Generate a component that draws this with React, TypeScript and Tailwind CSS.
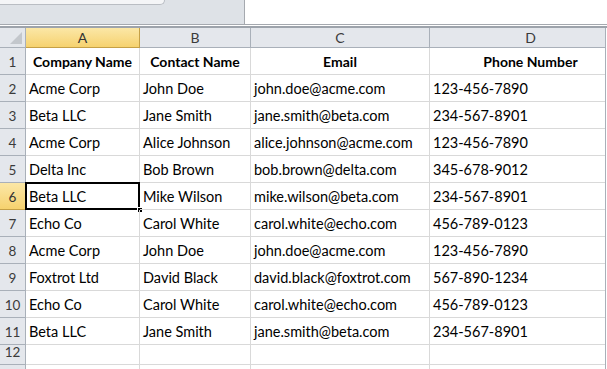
import React from "react"

const rows = [
  ["Acme Corp", "John Doe", "john.doe@acme.com", "123-456-7890"],
  ["Beta LLC", "Jane Smith", "jane.smith@beta.com", "234-567-8901"],
  ["Acme Corp", "Alice Johnson", "alice.johnson@acme.com", "123-456-7890"],
  ["Delta Inc", "Bob Brown", "bob.brown@delta.com", "345-678-9012"],
  ["Beta LLC", "Mike Wilson", "mike.wilson@beta.com", "234-567-8901"],
  ["Echo Co", "Carol White", "carol.white@echo.com", "456-789-0123"],
  ["Acme Corp", "John Doe", "john.doe@acme.com", "123-456-7890"],
  ["Foxtrot Ltd", "David Black", "david.black@foxtrot.com", "567-890-1234"],
  ["Echo Co", "Carol White", "carol.white@echo.com", "456-789-0123"],
  ["Beta LLC", "Jane Smith", "jane.smith@beta.com", "234-567-8901"],
]

const colWidths = ["w-[114px]", "w-[111px]", "w-[179px]", "w-[202px]"]
const headers = ["Company Name", "Contact Name", "Email", "Phone Number"]

function RowHead({ n, tall, selected }: { n: number; tall?: boolean; selected?: boolean }) {
  return (
    <div
      className={`w-[26px] shrink-0 flex items-end justify-center pb-[3px] border-b border-r text-[13.5px] leading-[17px] ${
        tall ? "h-[27px]" : "h-[20px]"
      } ${
        selected
          ? "bg-gradient-to-b from-[#fbe7a6] to-[#f6d26e] border-[#c5a046] text-[#333]"
          : "bg-[#e4e7ec] border-[#a9b0b9] text-[#3b3b3b]"
      }`}
    >
      {n}
    </div>
  )
}

export default function App() {
  return (
    <div
      className="w-[607px] h-[369px] overflow-hidden bg-white relative text-black"
      style={{ fontFamily: "Lato, 'Noto Sans', sans-serif" }}
    >
      {/* formula area */}
      <div className="flex h-[24px]">
        <div className="w-[245px] h-full bg-[#dee2e7] border-r border-[#a5a9af] relative">
          <div className="w-[165px] h-[5px] bg-[#f4f5f7] border-b border-r border-[#b9bdc3] rounded-br-[5px]" />
        </div>
        <div className="flex-1 bg-white" />
      </div>
      <div className="h-px bg-[#a5a9af]" />
      <div className="h-px bg-white" />
      <div className="h-[2px] bg-[#9da3ab]" />

      {/* column headers */}
      <div className="flex h-[20px]">
        <div className="w-[26px] shrink-0 h-full bg-[#e4e7ec] border-r border-b border-[#a9b0b9] relative">
          <div className="absolute right-[3px] bottom-[3px] w-0 h-0 border-l-[12px] border-l-transparent border-b-[12px] border-b-[#c3c7cc]" />
        </div>
        {["A", "B", "C", "D"].map((c, i) => (
          <div
            key={c}
            className={`${colWidths[i]} shrink-0 h-full flex items-center justify-center border-r border-b text-[14px] ${
              i === 0
                ? "bg-gradient-to-b from-[#fbe7a6] to-[#f6d26e] border-[#c5a046] text-[#333]"
                : "bg-[#e4e7ec] border-[#a9b0b9] text-[#3b3b3b]"
            }`}
          >
            {c}
          </div>
        ))}
      </div>

      {/* row 1 */}
      <div className="flex">
        <RowHead n={1} tall />
        {headers.map((h, i) => (
          <div
            key={h}
            className={`${colWidths[i]} shrink-0 h-[27px] flex items-end justify-center pb-[3px] border-r border-b border-[#d9d9d9] text-[14px] leading-[18px] font-bold whitespace-nowrap`}
          >
            {h}
          </div>
        ))}
      </div>

      {rows.map((r, ri) => (
        <div key={ri} className="flex">
          <RowHead n={ri + 2} tall selected={ri === 4} />
          {r.map((v, ci) => (
            <div
              key={ci}
              className={`${colWidths[ci]} shrink-0 h-[27px] flex items-end pl-[3px] pb-[3px] border-r border-b border-[#d9d9d9] text-[14.5px] leading-[18px] whitespace-nowrap relative`}
            >
              {v}
              {ri === 4 && ci === 0 && (
                <>
                  <div className="absolute -left-px -top-px -right-px -bottom-px border-2 border-black pointer-events-none" />
                  <div className="absolute -right-[4px] -bottom-[4px] w-[6px] h-[6px] bg-black border border-white" />
                </>
              )}
            </div>
          ))}
        </div>
      ))}

      {/* row 12 */}
      <div className="flex">
        <RowHead n={12} />
        {colWidths.map((w, i) => (
          <div key={i} className={`${w} shrink-0 h-[20px] border-r border-b border-[#d9d9d9]`} />
        ))}
      </div>
      <div className="flex">
        <div className="w-[26px] shrink-0 h-[20px] bg-[#e4e7ec] border-r border-[#a9b0b9]" />
        {colWidths.map((w, i) => (
          <div key={i} className={`${w} shrink-0 h-[20px] border-r border-[#d9d9d9]`} />
        ))}
      </div>

      {/* right pane edge */}
      <div className="absolute left-[605px] top-[28px] bottom-0 w-[2px] bg-white border-l border-[#a9b0b9]" />
    </div>
  )
}
